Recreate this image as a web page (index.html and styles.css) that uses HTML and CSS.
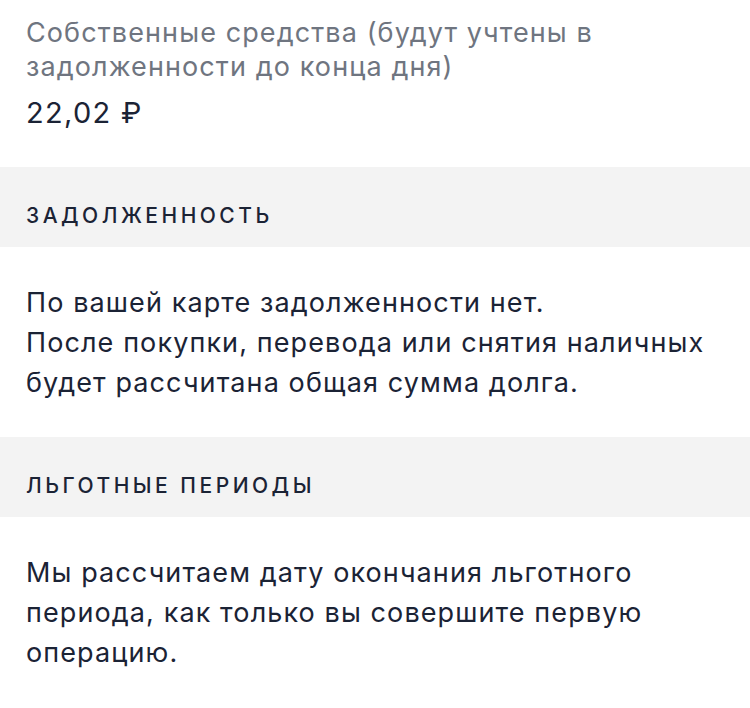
FILE: index.html
```html
<!DOCTYPE html>
<html lang="ru">
<head>
<meta charset="utf-8">
<title>Кредитная карта</title>
<link rel="stylesheet" href="styles.css">
</head>
<body>
  <section class="own">
    <p class="own-label">Собственные средства (будут учтены в задолженности до конца дня)</p>
    <p class="own-amount">22,02 ₽</p>
  </section>
  <h2 class="band">Задолженность</h2>
  <section class="block">
    <p class="text">По вашей карте задолженности нет.<br>После покупки, перевода или снятия наличных будет рассчитана общая сумма долга.</p>
  </section>
  <h2 class="band">Льготные периоды</h2>
  <section class="block">
    <p class="text">Мы рассчитаем дату окончания льготного периода, как только вы совершите первую операцию.</p>
  </section>
</body>
</html>
```
FILE: styles.css
```css
html, body {
  margin: 0;
  padding: 0;
  background: #ffffff;
}
body {
  font-family: Inter, "Noto Sans", sans-serif;
  color: #1b2335;
  width: 750px;
}
p, h2 {
  margin: 0;
}
.own {
  padding: 16px 40px 36px 26px;
}
.own-label {
  font-size: 27px;
  line-height: 34px;
  letter-spacing: 1.1px;
  color: #6f7580;
  max-width: 600px;
}
.own-amount {
  margin-top: 11px;
  font-size: 29px;
  line-height: 36px;
  letter-spacing: 1.3px;
  color: #1b2335;
}
.band {
  background: #f3f3f3;
  padding: 37px 26px 19px;
  font-size: 21px;
  line-height: 24px;
  font-weight: 500;
  text-transform: uppercase;
  letter-spacing: 3.5px;
  color: #1b2335;
}
.block {
  padding: 36px 30px 34px 26px;
}
.text {
  font-size: 27px;
  line-height: 40px;
  letter-spacing: 1.1px;
  color: #1b2335;
}
```
